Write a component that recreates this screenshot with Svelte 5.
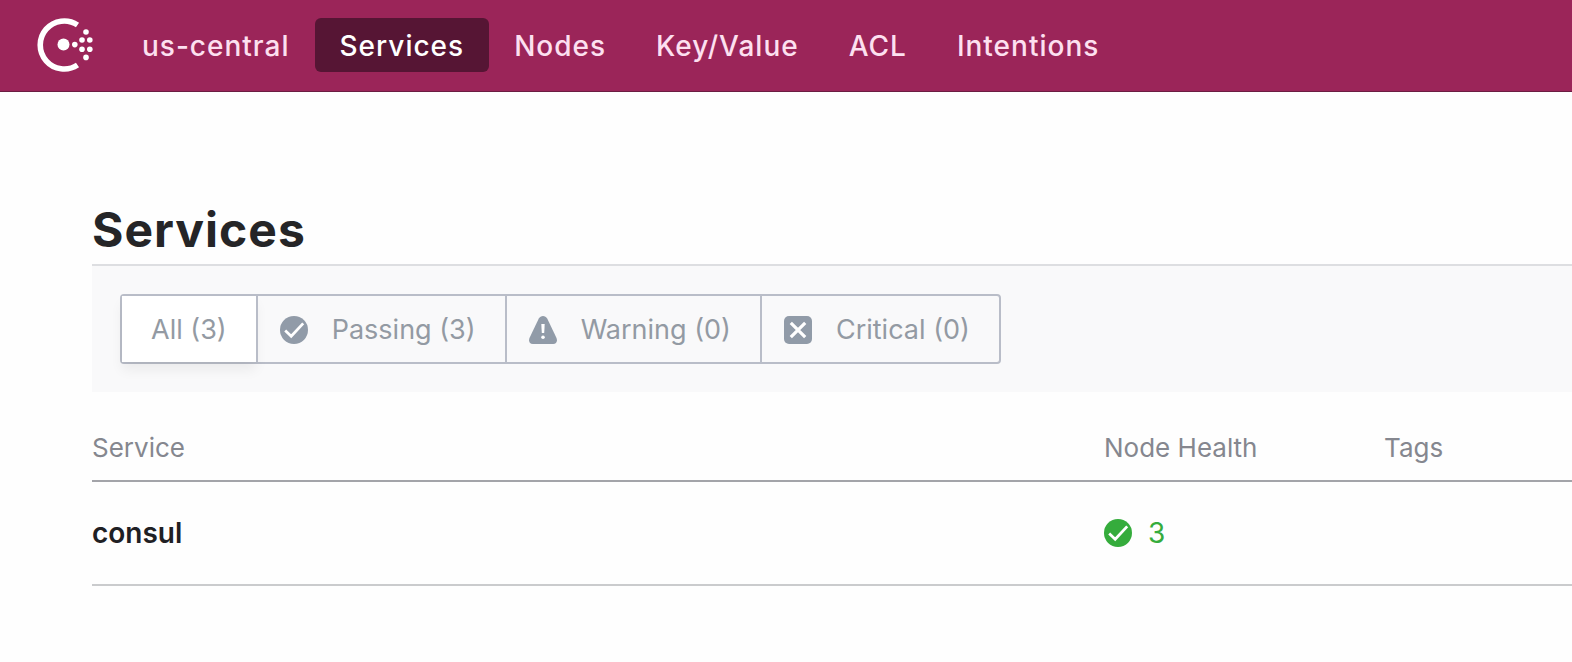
<script>
  const links = ['us-central', 'Services', 'Nodes', 'Key/Value', 'ACL', 'Intentions'];
  const filters = [
    { id: 'all', label: 'All (3)' },
    { id: 'passing', label: 'Passing (3)' },
    { id: 'warning', label: 'Warning (0)' },
    { id: 'critical', label: 'Critical (0)' }
  ];
  let current = $state('Services');
  let filter = $state('all');
</script>

{#snippet icon(kind)}
  <svg class="icon" viewBox="0 0 28 28" aria-hidden="true">
    {#if kind === 'passing'}
      <circle cx="14" cy="14" r="14" fill="currentColor" />
      <path d="M5.2 14.6l6 5.6L23.200 7.400" fill="none" stroke="#fff" stroke-width="2.800" />
    {:else if kind === 'warning'}
      <path d="M14 0c1.800 0 3.200.9 4.200 2.600l9.200 19.200c1.300 3.400.1 6.200-3.200 6.200H3.800c-3.300 0-4.500-2.800-3.200-6.200L9.800 2.600C10.800.9 12.200 0 14 0z" fill="currentColor" />
      <path d="M12.300 8h3.400l-.5 9h-2.400z" fill="#fff" />
      <circle cx="14" cy="21.300" r="1.800" fill="#fff" />
    {:else}
      <rect width="28" height="28" rx="5" fill="currentColor" />
      <path d="M6.800 6.800l14.400 14.400M21.200 6.800L6.800 21.200" fill="none" stroke="#fff" stroke-width="3.200" />
    {/if}
  </svg>
{/snippet}

<header>
  <a class="logo" href="#home" aria-label="Consul">
    <svg viewBox="0 0 56 54" aria-hidden="true">
      <path d="M40.500 7A24 24 0 1 0 40.500 47" fill="none" stroke="#fff" stroke-width="5.600" />
      <g fill="#fff">
        <circle cx="26.500" cy="26.600" r="6" />
        <circle cx="37.800" cy="26.600" r="2.800" />
        <circle cx="45" cy="22" r="2.800" />
        <circle cx="45" cy="31.200" r="2.800" />
        <circle cx="52.800" cy="22" r="2.800" />
        <circle cx="52.800" cy="31.200" r="2.800" />
        <circle cx="49" cy="14" r="2.800" />
        <circle cx="49" cy="39.400" r="2.800" />
      </g>
    </svg>
  </a>
  <nav>
    {#each links as link}
      <a href="#{link}" class:active={current === link} onclick={() => (current = link)}>{link}</a>
    {/each}
  </nav>
</header>

<main>
  <h1>Services</h1>
  <div class="toolbar">
    <div class="filters" role="radiogroup" aria-label="Health status">
      {#each filters as f}
        <label class:selected={filter === f.id}>
          <input type="radio" name="status" value={f.id} bind:group={filter} />
          {#if f.id !== 'all'}{@render icon(f.id)}{/if}
          <span>{f.label}</span>
        </label>
      {/each}
    </div>
  </div>
  <table>
    <thead>
      <tr><th>Service</th><th class="health">Node Health</th><th class="tags">Tags</th></tr>
    </thead>
    <tbody>
      <tr>
        <td><a href="#consul">consul</a></td>
        <td><span class="count">{@render icon('passing')}3</span></td>
        <td></td>
      </tr>
    </tbody>
  </table>
</main>

<style>
  :global(body) {
    background: #fefefe;
    font-family: Inter, 'Liberation Sans', sans-serif;
  }
  header {
    display: flex;
    align-items: center;
    gap: 24px;
    padding: 18px 37px 19px;
    background: #9b2559;
    border-bottom: 1px solid #6b1d42;
  }
  .logo {
    display: block;
    width: 56px;
    height: 54px;
  }
  .logo svg {
    display: block;
    width: 100%;
  }
  nav {
    display: flex;
  }
  nav a {
    padding: 2px 25px 0;
    border-radius: 6px;
    color: #fde0f0;
    font-size: 28px;
    font-weight: 500;
    line-height: 52px;
    letter-spacing: 1px;
    text-decoration: none;
    white-space: nowrap;
  }
  nav a.active {
    background: #561534;
    color: #fff;
  }
  main {
    padding: 107px 0 0 92px;
  }
  h1 {
    margin: 0;
    padding-bottom: 3px;
    color: #252527;
    font-size: 48px;
    font-weight: 700;
    line-height: 62px;
    letter-spacing: 1px;
  }
  .toolbar {
    display: flex;
    padding: 28px;
    background: #f9f9fa;
    border-top: 2px solid #dddee1;
  }
  .filters {
    display: flex;
    border: 2px solid #b9bdc8;
    border-radius: 4px;
  }
  label {
    display: flex;
    align-items: center;
    gap: 24px;
    padding: 2px 29px 0 22px;
    color: #939aa3;
    font-size: 27px;
    line-height: 64px;
    white-space: nowrap;
    cursor: pointer;
  }
  label + label {
    border-left: 2px solid #b9bdc8;
  }
  label:first-child {
    padding-left: 29px;
  }
  label.selected {
    background: #fff;
    box-shadow: 0 8px 12px rgba(0, 0, 0, 0.06);
  }
  input {
    position: absolute;
    opacity: 0;
    pointer-events: none;
  }
  .icon {
    display: block;
    flex: none;
    width: 28px;
    height: 28px;
  }
  label .icon {
    color: #919ba8;
  }
  table {
    width: 100%;
    border-collapse: collapse;
    table-layout: fixed;
  }
  th {
    padding: 37px 0 13px;
    border-bottom: 2px solid #a3a4a9;
    color: #85878f;
    font-size: 26px;
    font-weight: 400;
    line-height: 38px;
    text-align: left;
  }
  .health {
    width: 280px;
  }
  .tags {
    width: 188px;
  }
  td {
    padding: 32px 0;
    border-bottom: 2px solid #cacbcd;
    font-size: 28px;
    line-height: 38px;
  }
  td a {
    color: #1f2024;
    font-weight: 600;
    text-decoration: none;
  }
  .count {
    display: flex;
    align-items: center;
    gap: 16px;
    color: #35ac3c;
  }
</style>
